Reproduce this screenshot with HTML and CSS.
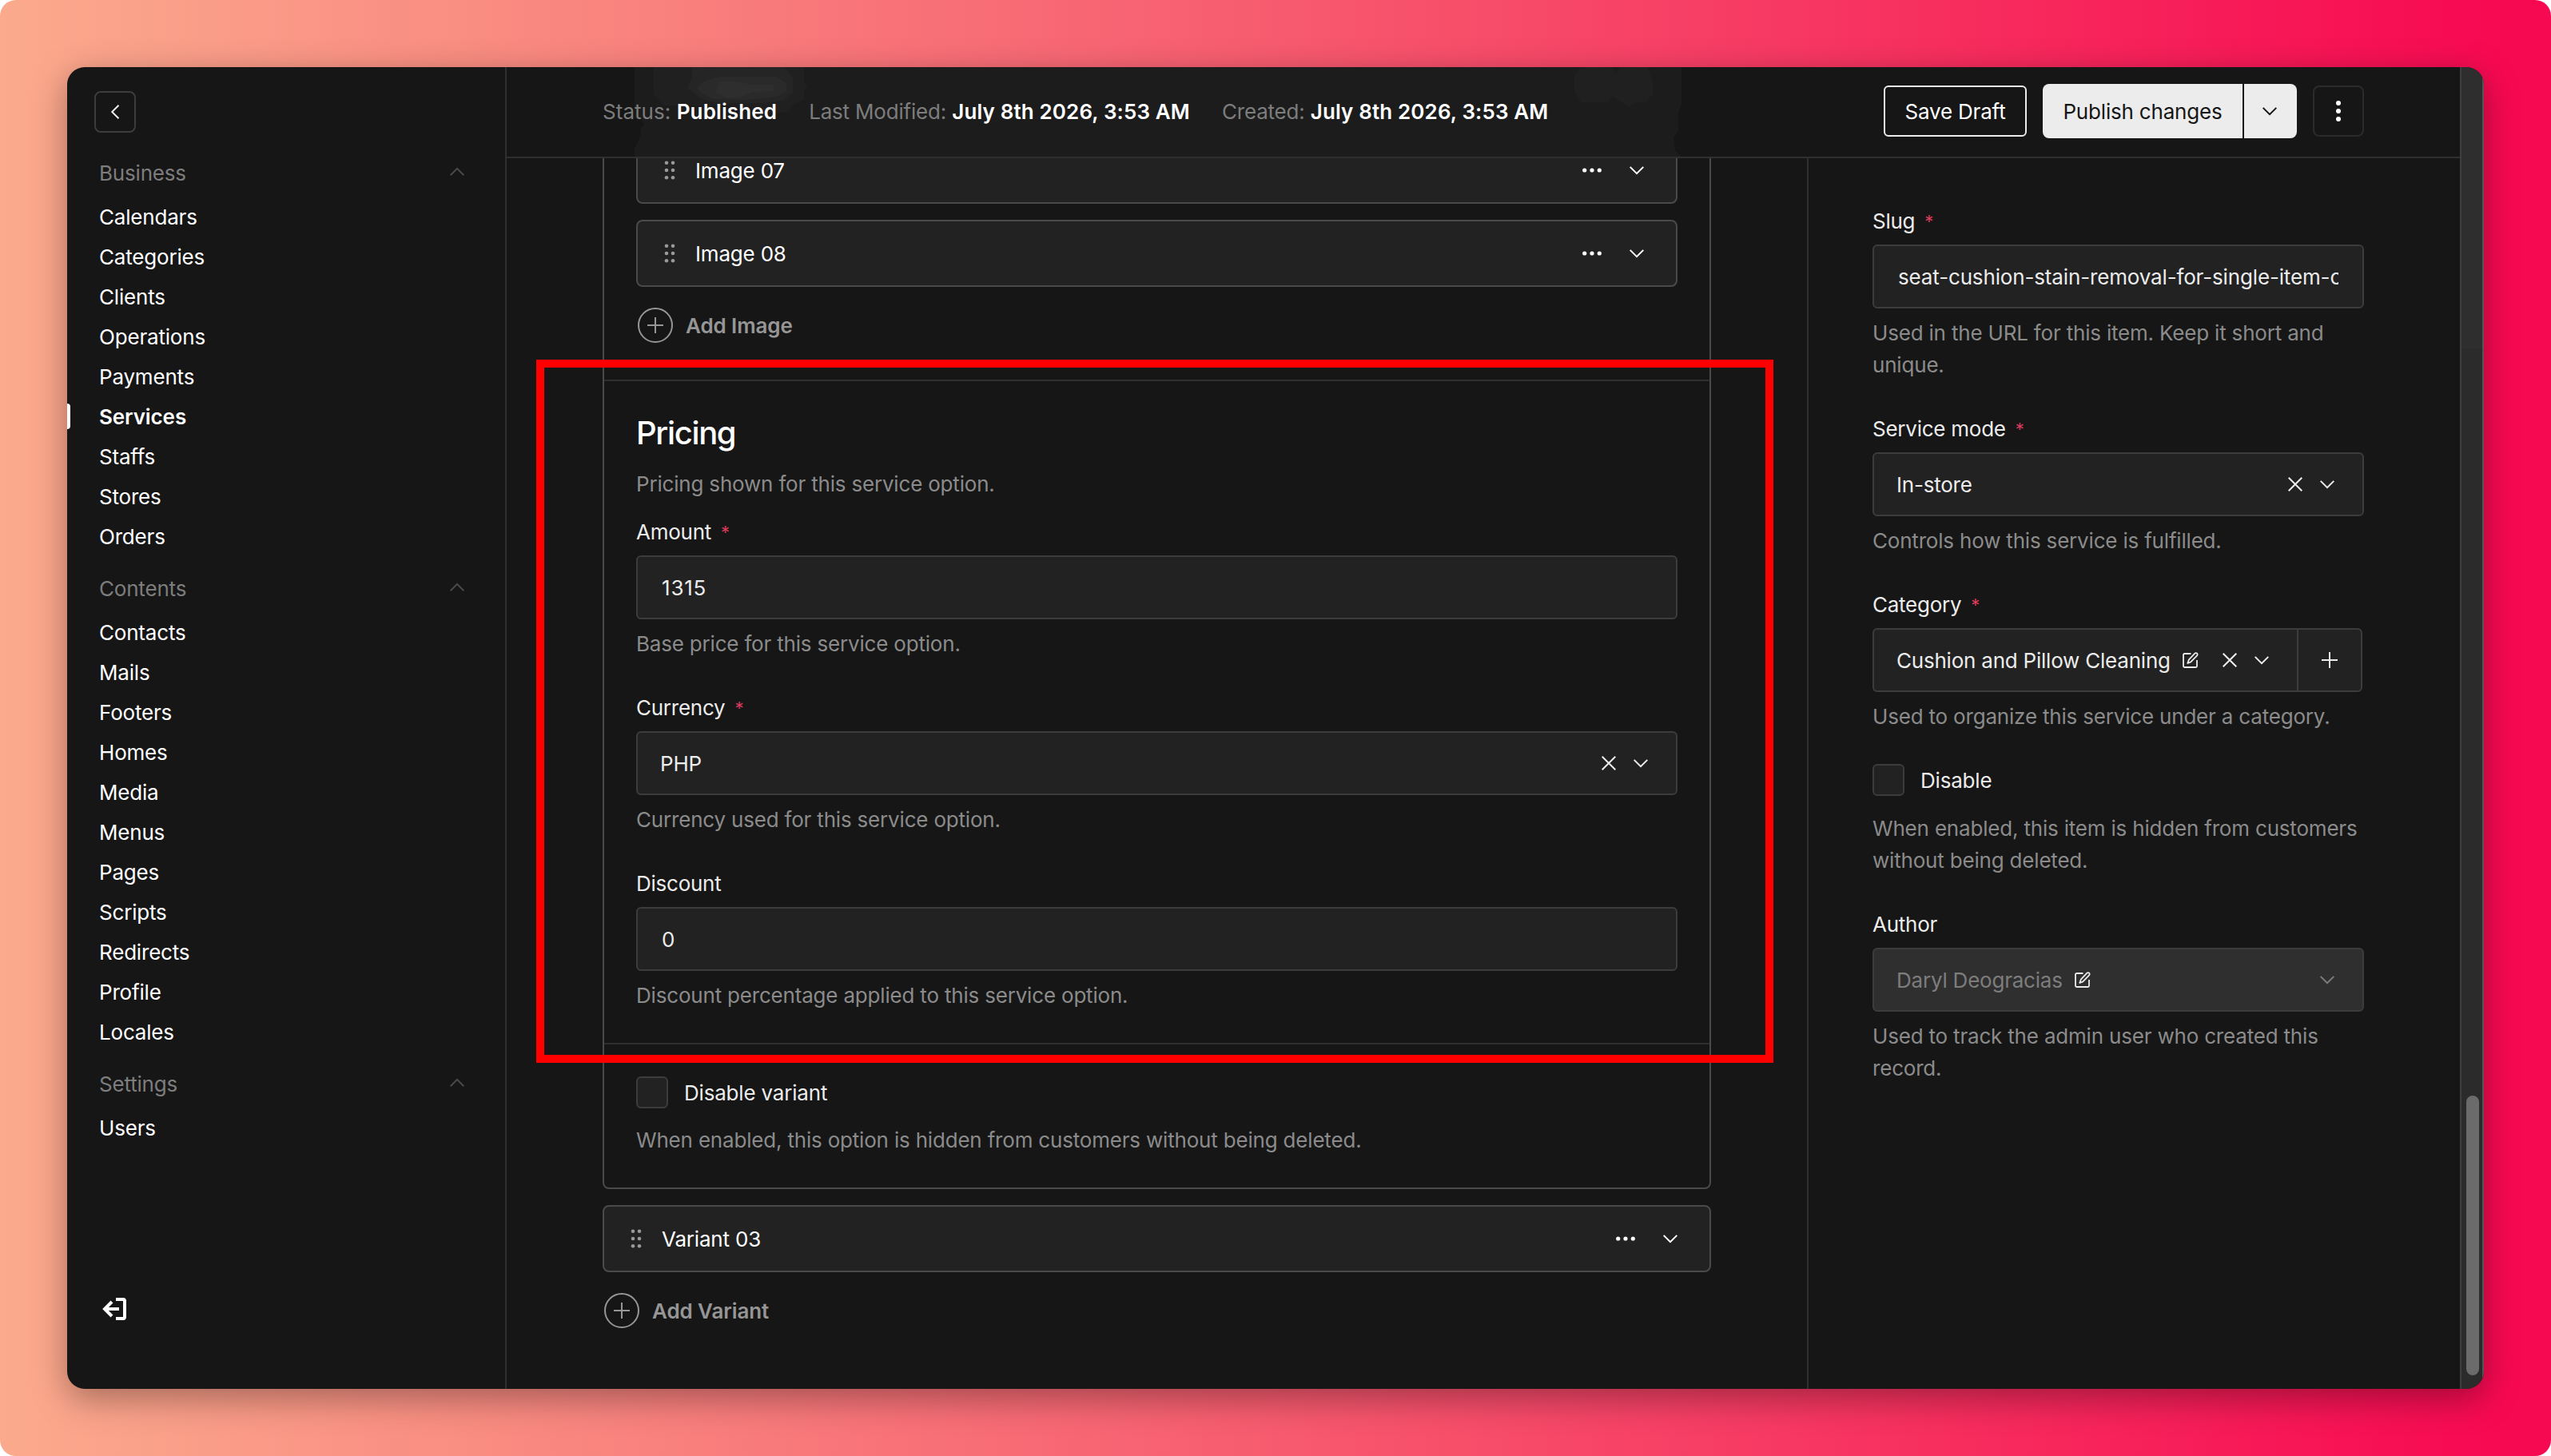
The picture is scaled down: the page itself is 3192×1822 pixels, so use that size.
FILE: index.html
```html
<!DOCTYPE html>
<html lang="en">
<head>
<meta charset="utf-8">
<title>Service editor</title>
<link rel="stylesheet" href="styles.css">
</head>
<body>
<svg class="sprite" aria-hidden="true">
  <symbol id="chevron-down" viewBox="0 0 18 18"><path d="M.7 4.9 9 13.2l8.300-8.300" fill="none" stroke="currentColor" stroke-width="2"/></symbol>
  <symbol id="chevron-up" viewBox="0 0 18 18"><path d="M.7 13.200 9 4.900l8.300 8.300" fill="none" stroke="currentColor" stroke-width="2"/></symbol>
  <symbol id="chevron-left" viewBox="0 0 18 18"><path d="M13.500.7 5.200 9l8.300 8.300" fill="none" stroke="currentColor" stroke-width="2"/></symbol>
  <symbol id="cross" viewBox="0 0 18 18"><path d="m.7.7 16.600 16.600M17.300.7.7 17.300" fill="none" stroke="currentColor" stroke-width="2"/></symbol>
  <symbol id="plus" viewBox="0 0 20 20"><path d="M10 0v20M0 10h20" fill="none" stroke="currentColor" stroke-width="2"/></symbol>
  <symbol id="edit" viewBox="0 0 20 20"><path d="M10.500 2H2.500A1.500 1.500 0 0 0 1 3.500v14A1.500 1.500 0 0 0 2.500 19h14a1.500 1.500 0 0 0 1.500-1.500V10M15.400 1.700a1.800 1.800 0 0 1 2.700 2.700L10.300 12.300 6.300 14l1.500-4.300Z" fill="none" stroke="currentColor" stroke-width="1.800" stroke-linejoin="round"/></symbol>
  <symbol id="drag" viewBox="0 0 14 24"><g fill="currentColor"><circle cx="3" cy="2.700" r="2.300"/><circle cx="11" cy="2.700" r="2.300"/><circle cx="3" cy="12" r="2.300"/><circle cx="11" cy="12" r="2.300"/><circle cx="3" cy="21.300" r="2.300"/><circle cx="11" cy="21.300" r="2.300"/></g></symbol>
  <symbol id="dots" viewBox="0 0 24 6"><g fill="currentColor"><circle cx="2.700" cy="3" r="2.600"/><circle cx="12" cy="3" r="2.600"/><circle cx="21.300" cy="3" r="2.600"/></g></symbol>
  <symbol id="kebab" viewBox="0 0 6 26"><g fill="currentColor"><circle cx="3" cy="3" r="3"/><circle cx="3" cy="13" r="3"/><circle cx="3" cy="23" r="3"/></g></symbol>
  <symbol id="add" viewBox="0 0 44 44"><g fill="none" stroke="currentColor" stroke-width="2"><circle cx="22" cy="22" r="21"/><path d="M22 12v20M12 22h20"/></g></symbol>
  <symbol id="logout" viewBox="0 0 30 28"><g fill="none" stroke="currentColor" stroke-width="4"><path d="M17 2h9.500a1.500 1.500 0 0 1 1.500 1.500v21a1.500 1.500 0 0 1-1.500 1.500H17"/><path d="M21 14H3"/><path d="m12 5-9 9 9 9"/></g></symbol>
</svg>

<div class="backdrop">
  <div class="window">
    <nav class="sidebar">
      <button class="collapse"><svg class="i18"><use href="#chevron-left"/></svg></button>
      <section class="group">
        <h2>Business<svg class="i18"><use href="#chevron-up"/></svg></h2>
        <a>Calendars</a><a>Categories</a><a>Clients</a><a>Operations</a><a>Payments</a><a class="active">Services</a><a>Staffs</a><a>Stores</a><a>Orders</a>
      </section>
      <section class="group">
        <h2>Contents<svg class="i18"><use href="#chevron-up"/></svg></h2>
        <a>Contacts</a><a>Mails</a><a>Footers</a><a>Homes</a><a>Media</a><a>Menus</a><a>Pages</a><a>Scripts</a><a>Redirects</a><a>Profile</a><a>Locales</a>
      </section>
      <section class="group">
        <h2>Settings<svg class="i18"><use href="#chevron-up"/></svg></h2>
        <a>Users</a>
      </section>
      <svg class="logout"><use href="#logout"/></svg>
    </nav>

    <div class="page">
      <header class="topbar">
        <svg class="glow" viewBox="0 0 1310 112">
          <path fill="#1c1c1c" d="M0 0h1310v46l-4 12v22l-6 8 2 16 8 8H0V102l4-8 4-10v-8l4-4-4-6-8-2Z"/>
          <path fill="#202020" d="M24 0h188v18l4 6-4 6v10l-12 6-8 10-22 3-30-5-20-6H36l-12-14Z"/>
          <path fill="#252525" d="M72 0h116l10 14v18l-12 10-26 3H106L84 40 66 26l6-12Z"/>
          <path fill="#2a2a2a" d="M106 12h72l12 8v10l-12 7-40 4-40-1-14-7-6-7 8-8Z"/>
          <path fill="#2e2e2e" d="M106 18h20l20 4h28v8l-28 2-14 6h-18l-12-6Z"/>
          <path fill="#202020" d="M1184 0h38l6 8 6-8h34l6 18v16l-8 10h-14l-8 6-12-8-8-6-6 8h-34l-8-14V12Z"/>
        </svg>
        <ul class="meta">
          <li>Status: <b>Published</b></li>
          <li>Last Modified: <b>July 8th 2026, 3:53 AM</b></li>
          <li>Created: <b>July 8th 2026, 3:53 AM</b></li>
        </ul>
        <div class="actions">
          <button class="draft">Save Draft</button>
          <div class="publish"><button class="publish-main">Publish changes</button><button class="publish-more"><svg class="i18"><use href="#chevron-down"/></svg></button></div>
          <button class="more"><svg class="kebab"><use href="#kebab"/></svg></button>
        </div>
      </header>

      <div class="body">
        <main class="content">
          <article class="variant">
            <div class="images">
              <div class="row"><svg class="drag"><use href="#drag"/></svg><span>Image 07</span><svg class="dots"><use href="#dots"/></svg><svg class="i18"><use href="#chevron-down"/></svg></div>
              <div class="row"><svg class="drag"><use href="#drag"/></svg><span>Image 08</span><svg class="dots"><use href="#dots"/></svg><svg class="i18"><use href="#chevron-down"/></svg></div>
              <div class="add"><svg><use href="#add"/></svg><span>Add Image</span></div>
            </div>
            <section class="pricing">
              <h1>Pricing</h1>
              <p class="help intro">Pricing shown for this service option.</p>
              <div class="field">
                <label>Amount<i>*</i></label>
                <div class="input number">1315</div>
                <p class="help">Base price for this service option.</p>
              </div>
              <div class="field">
                <label>Currency<i>*</i></label>
                <div class="input select"><span class="value">PHP</span><svg class="i18"><use href="#cross"/></svg><svg class="i18"><use href="#chevron-down"/></svg></div>
                <p class="help">Currency used for this service option.</p>
              </div>
              <div class="field">
                <label>Discount</label>
                <div class="input number">0</div>
                <p class="help">Discount percentage applied to this service option.</p>
              </div>
            </section>
            <section class="disable">
              <div class="check"><span class="box"></span><span class="name">Disable variant</span></div>
              <p class="help">When enabled, this option is hidden from customers without being deleted.</p>
            </section>
          </article>
          <div class="row"><svg class="drag"><use href="#drag"/></svg><span>Variant 03</span><svg class="dots"><use href="#dots"/></svg><svg class="i18"><use href="#chevron-down"/></svg></div>
          <div class="add"><svg><use href="#add"/></svg><span>Add Variant</span></div>
        </main>

        <aside class="details">
          <div class="field">
            <label>Slug<i>*</i></label>
            <div class="input"><span class="clip">seat-cushion-stain-removal-for-single-item-cleaning</span></div>
            <p class="help">Used in the URL for this item. Keep it short and unique.</p>
          </div>
          <div class="field">
            <label>Service mode<i>*</i></label>
            <div class="input select"><span class="value">In-store</span><svg class="i18"><use href="#cross"/></svg><svg class="i18"><use href="#chevron-down"/></svg></div>
            <p class="help">Controls how this service is fulfilled.</p>
          </div>
          <div class="field">
            <label>Category<i>*</i></label>
            <div class="joined">
              <div class="input select"><span class="value">Cushion and Pillow Cleaning<svg class="edit"><use href="#edit"/></svg></span><svg class="i18"><use href="#cross"/></svg><svg class="i18"><use href="#chevron-down"/></svg></div>
              <button class="new"><svg class="i20"><use href="#plus"/></svg></button>
            </div>
            <p class="help">Used to organize this service under a category.</p>
          </div>
          <div class="field toggle">
            <div class="check"><span class="box"></span><span class="name">Disable</span></div>
            <p class="help">When enabled, this item is hidden from customers without being deleted.</p>
          </div>
          <div class="field">
            <label>Author</label>
            <div class="input select readonly"><span class="value">Daryl Deogracias<svg class="edit"><use href="#edit"/></svg></span><svg class="i18"><use href="#chevron-down"/></svg></div>
            <p class="help">Used to track the admin user who created this record.</p>
          </div>
        </aside>
      </div>
    </div>

    <div class="scrollbar"><div class="upper"></div><div class="thumb"></div></div>
  </div>
  <div class="highlight"></div>
</div>
</body>
</html>
```
FILE: styles.css
```css
* { box-sizing: border-box; margin: 0; padding: 0; }
body {
  background: #fff;
  color: #ececec;
  font: 400 26px/40px Inter, "Liberation Sans", sans-serif;
  letter-spacing: -0.19px;
}
button { font: inherit; letter-spacing: inherit; color: inherit; background: none; border: 0; }
svg { display: block; flex: none; }
.sprite { position: absolute; width: 0; height: 0; }
.i18 { width: 18px; height: 18px; }
.i20 { width: 20px; height: 20px; }

.backdrop {
  position: relative;
  width: 3192px;
  height: 1822px;
  padding: 84px;
  border-radius: 20px;
  overflow: hidden;
  background: linear-gradient(90deg, #fbaa8d 0, #f75e70 48%, #f70951 98%);
}
.window {
  display: flex;
  width: 3024px;
  height: 1654px;
  border-radius: 22px;
  overflow: hidden;
  background: #161616;
  box-shadow: 0 12px 44px rgba(0, 0, 0, .34);
}

/* sidebar */
.sidebar {
  display: flex;
  flex-direction: column;
  width: 550px;
  padding: 30px 51px 86px 40px;
  border-right: 2px solid #2f2f2f;
}
.collapse {
  display: flex;
  align-items: center;
  justify-content: center;
  width: 52px;
  height: 52px;
  margin: 0 0 31px -6px;
  border: 2px solid #3c3c3c;
  border-radius: 8px;
}
.group { margin-bottom: 20px; }
.group h2 {
  display: flex;
  align-items: center;
  justify-content: space-between;
  margin-bottom: 10px;
  font-size: 26px;
  font-weight: 400;
  color: #7d7d7d;
}
.group h2 svg { color: #4b4b4b; margin-top: -4px; }
.group a { display: block; line-height: 50px; color: #fff; }
.group .active { position: relative; font-weight: 600; letter-spacing: -.1px; }
.active::before {
  content: "";
  position: absolute;
  left: -40px;
  top: 8px;
  width: 4px;
  height: 32px;
  border-radius: 0 4px 4px 0;
  background: #fff;
}
.logout { width: 30px; height: 28px; margin: auto 0 0 4px; color: #fff; }

/* page frame */
.page { display: flex; flex-direction: column; width: 2444px; }
.topbar {
  position: relative;
  display: flex;
  align-items: center;
  justify-content: space-between;
  height: 114px;
  padding: 0 120px 2px 120px;
  border-bottom: 2px solid #2f2f2f;
}
.glow { position: absolute; left: 160px; top: 0; width: 1310px; height: 112px; }
.meta { position: relative; display: flex; gap: 40px; padding-top: 2px; list-style: none; color: #7d7d7d; }
.meta li:first-child { letter-spacing: .05px; }
.meta b { font-weight: 600; letter-spacing: .12px; color: #fff; }
.actions { position: relative; display: flex; align-items: center; }
.draft {
  width: 179px;
  height: 64px;
  padding-top: 2px;
  margin-right: 20px;
  border: 2px solid #ececec;
  border-radius: 6px;
  color: #fff;
}
.publish { display: flex; gap: 2px; height: 68px; margin-right: 20px; color: #161616; }
.publish button { display: flex; align-items: center; justify-content: center; background: #ececec; }
.publish .publish-main { width: 250px; padding-top: 2px; border-radius: 8px 0 0 8px; }
.publish-more { width: 66px; padding-right: 2px; border-radius: 0 8px 8px 0; }
.more {
  display: flex;
  align-items: center;
  justify-content: center;
  width: 64px;
  height: 64px;
  border: 2px solid #2b2b2b;
  border-radius: 8px;
  color: #fff;
}
.kebab { width: 6px; height: 26px; }
.body { display: flex; flex: 1; min-height: 0; overflow: hidden; }
.content { width: 1627px; padding: 0 120px; }
.variant {
  margin-bottom: 20px;
  border: 2px solid #4a4a4a;
  border-top: 0;
  border-radius: 0 0 8px 8px;
}
.images { margin-top: -27px; padding: 0 40px 46px; }

/* collapsible rows */
.row {
  display: flex;
  align-items: center;
  height: 84px;
  padding: 0 40px 0 33px;
  border: 2px solid #4a4a4a;
  border-radius: 8px;
  background: #222;
  color: #fff;
}
.row + .row { margin-top: 20px; }
.row span { flex: 1; margin-left: 25px; padding-top: 2px; }
.drag { width: 14px; height: 24px; color: #9a9a9a; }
.dots { width: 24px; height: 6px; margin-right: 35px; }
.add {
  display: flex;
  align-items: center;
  gap: 16px;
  height: 44px;
  margin: 26px 0 0 2px;
  font-weight: 600;
  letter-spacing: -.1px;
  color: #969696;
}
.add span { padding-top: 2px; }
.add svg { width: 44px; height: 44px; }

/* fields */
.pricing { padding: 41px 40px 39px; border: solid #2f2f2f; border-width: 2px 0; }
.pricing h1 {
  margin-bottom: 20px;
  font-size: 40px;
  line-height: 48px;
  font-weight: 500;
  letter-spacing: -1.35px;
  color: #fff;
}
.intro { margin-bottom: 20px; }
.field + .field { margin-top: 40px; }
.field label { display: flex; margin-bottom: 9px; letter-spacing: -.25px; }
.field label i { margin-left: 12px; font-size: 22px; font-style: normal; color: #da3b5c; }
.input {
  display: flex;
  align-items: center;
  height: 80px;
  padding: 2px 30px 0;
  border: 2px solid #3c3c3c;
  border-radius: 6px;
  background: #222;
}
.number { letter-spacing: .8px; }
.clip { overflow: hidden; white-space: nowrap; letter-spacing: -.15px; }
.select { padding: 0 35px 0 28px; gap: 22px; }
.value { display: flex; align-items: center; flex: 1; padding-top: 1px; white-space: nowrap; letter-spacing: -.22px; }
.edit { width: 20px; height: 20px; margin: -1px 0 0 15px; color: #ececec; }
.readonly { background: #2f2f2f; border-color: #3c3c3c; color: #7d7d7d; }
.joined { display: flex; width: 613px; }
.joined .input { width: 531px; border-right: 0; border-radius: 6px 0 0 6px; }
.new {
  display: flex;
  align-items: center;
  justify-content: center;
  width: 82px;
  height: 80px;
  border: 2px solid #3c3c3c;
  border-radius: 0 6px 6px 0;
  background: #222;
}
.help { margin-top: 11px; color: #8b8b8b; }
.intro { margin-top: 0; }
.disable { padding: 40px 40px 39px; }
.check { display: flex; align-items: center; gap: 20px; height: 40px; }
.name { padding-top: 2px; }
.box { width: 40px; height: 40px; border: 2px solid #3c3c3c; border-radius: 6px; background: #222; }
.check + .help { margin-top: 20px; }
.field.toggle { margin-top: 39px; }
.toggle .check + .help { margin-top: 21px; }
.details { width: 817px; padding: 59px 120px 0 80px; border-left: 2px solid #2f2f2f; }

/* scrollbar */
.scrollbar {
  display: flex;
  flex-direction: column;
  justify-content: space-between;
  width: 30px;
  border: solid #3e3e3e;
  border-width: 0 2px;
  border-right-color: #555;
  background: #2b2b2b;
}
.upper { height: 352px; background: #2e2e2e; }
.thumb { width: 16px; height: 350px; margin: 0 0 17px 6px; border-radius: 8px; background: #6b6b6b; }

/* annotation frame drawn over the editor */
.highlight {
  position: absolute;
  left: 671px;
  top: 450px;
  width: 1548px;
  height: 880px;
  border: 10px solid #f00;
}
```
